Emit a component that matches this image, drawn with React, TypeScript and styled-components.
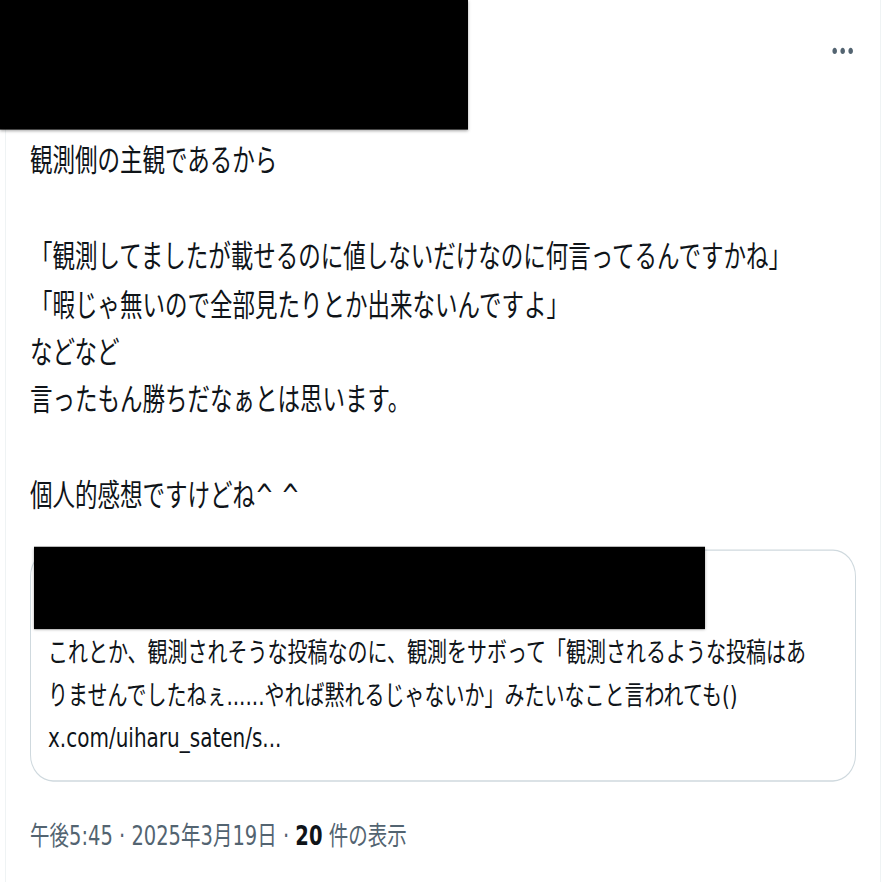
import React from "react";
import styled, { createGlobalStyle } from "styled-components";

/* The reference capture is stretched vertically; every vertical length is
   given in screen pixels and divided by S, and the stage is scaled back. */
const S = 1.35;
const v = (px: number) => `${(px / S).toFixed(2)}px`;

const GlobalStyle = createGlobalStyle`
  html, body {
    margin: 0;
    padding: 0;
    background: #ffffff;
  }
  body {
    font-family: "DejaVu Sans", "Noto Sans CJK JP", sans-serif;
    -webkit-font-smoothing: antialiased;
  }
`;

const Page = styled.div`
  width: 882px;
  height: 882px;
  overflow: hidden;
`;

const Stage = styled.div`
  width: 882px;
  transform: scaleY(${S});
  transform-origin: top left;
`;

const Tweet = styled.article`
  position: relative;
  box-sizing: border-box;
  margin-left: 5px;
  width: 876px;
  min-height: ${v(900)};
  border-left: 1px solid #eff3f4;
  border-right: 1px solid #eff3f4;
  color: #0f1419;
`;

const Header = styled.header`
  position: relative;
  display: flex;
  justify-content: flex-end;
  align-items: flex-start;
  height: ${v(130)};
  padding-right: 23.6px;
`;

const Redaction = styled.div<{ $w: number; $h: number; $left: number; $top: number }>`
  position: absolute;
  left: ${(p) => p.$left}px;
  top: ${(p) => v(p.$top)};
  width: ${(p) => p.$w}px;
  height: ${(p) => v(p.$h)};
  background: #000000;
  box-shadow: 0 1px 2.5px rgba(0, 0, 0, 0.35);
`;

const MoreButton = styled.button`
  margin-top: ${v(32.2)};
  padding: 0;
  border: 0;
  background: transparent;
  width: 27.4px;
  height: 27.4px;
  display: flex;
  color: #536471;
  svg {
    width: 27.4px;
    height: 27.4px;
  }
`;

const Body = styled.div`
  margin-top: ${v(8)};
  padding: 0 24px;
  font-size: 22.5px;
  line-height: ${v(47.86)};
  white-space: pre-wrap;
`;

const QuoteCard = styled.div`
  margin: ${v(28)} 24px 0 24px;
  border: 1px solid #cfd9de;
  border-radius: 23px / 20px;
  padding-bottom: ${v(21)};
`;

const QuoteHeader = styled.div`
  position: relative;
  height: ${v(81.6)};
`;

const QuoteText = styled.div`
  padding: 0 30px 0 17px;
  font-size: 20px;
  line-height: ${v(42.5)};
  word-break: break-all;
`;

const Footer = styled.div`
  margin-top: ${v(41)};
  padding: 0 24px;
  font-size: 19.5px;
  line-height: ${v(30)};
  color: #536471;
  white-space: nowrap;
`;

const Strong = styled.span`
  color: #0f1419;
  font-weight: 700;
`;

const MoreIcon = () => (
  <svg viewBox="0 0 24 24" aria-hidden="true">
    <path
      fill="currentColor"
      d="M3 12c0-1.1.9-2 2-2s2 .9 2 2-.9 2-2 2-2-.9-2-2zm9 2c1.1 0 2-.9 2-2s-.9-2-2-2-2 .9-2 2 .9 2 2 2zm7 0c1.1 0 2-.9 2-2s-.9-2-2-2-2 .9-2 2 .9 2 2 2z"
    />
  </svg>
);

const bodyText = `観測側の主観であるから

「観測してましたが載せるのに値しないだけなのに何言ってるんですかね」
「暇じゃ無いので全部見たりとか出来ないんですよ」
などなど
言ったもん勝ちだなぁとは思います。

個人的感想ですけどね^ ^`;

export default function App() {
  return (
    <>
      <GlobalStyle />
      <Page>
        <Stage>
          <Tweet>
            <Header>
              <Redaction $left={-6} $top={0} $w={468} $h={130} />
              <MoreButton aria-label="もっと見る">
                <MoreIcon />
              </MoreButton>
            </Header>
            <Body>{bodyText}</Body>
            <QuoteCard>
              <QuoteHeader>
                <Redaction $left={3} $top={-3.35} $w={671} $h={82} />
              </QuoteHeader>
              <QuoteText>
                これとか、観測されそうな投稿なのに、観測をサボって「観測されるような投稿はありませんでしたねぇ......やれば黙れるじゃないか」みたいなこと言われても()
                <br />
                x.com/uiharu_saten/s...
              </QuoteText>
            </QuoteCard>
            <Footer>
              午後5:45 · 2025年3月19日 · <Strong>20</Strong> 件の表示
            </Footer>
          </Tweet>
        </Stage>
      </Page>
    </>
  );
}
